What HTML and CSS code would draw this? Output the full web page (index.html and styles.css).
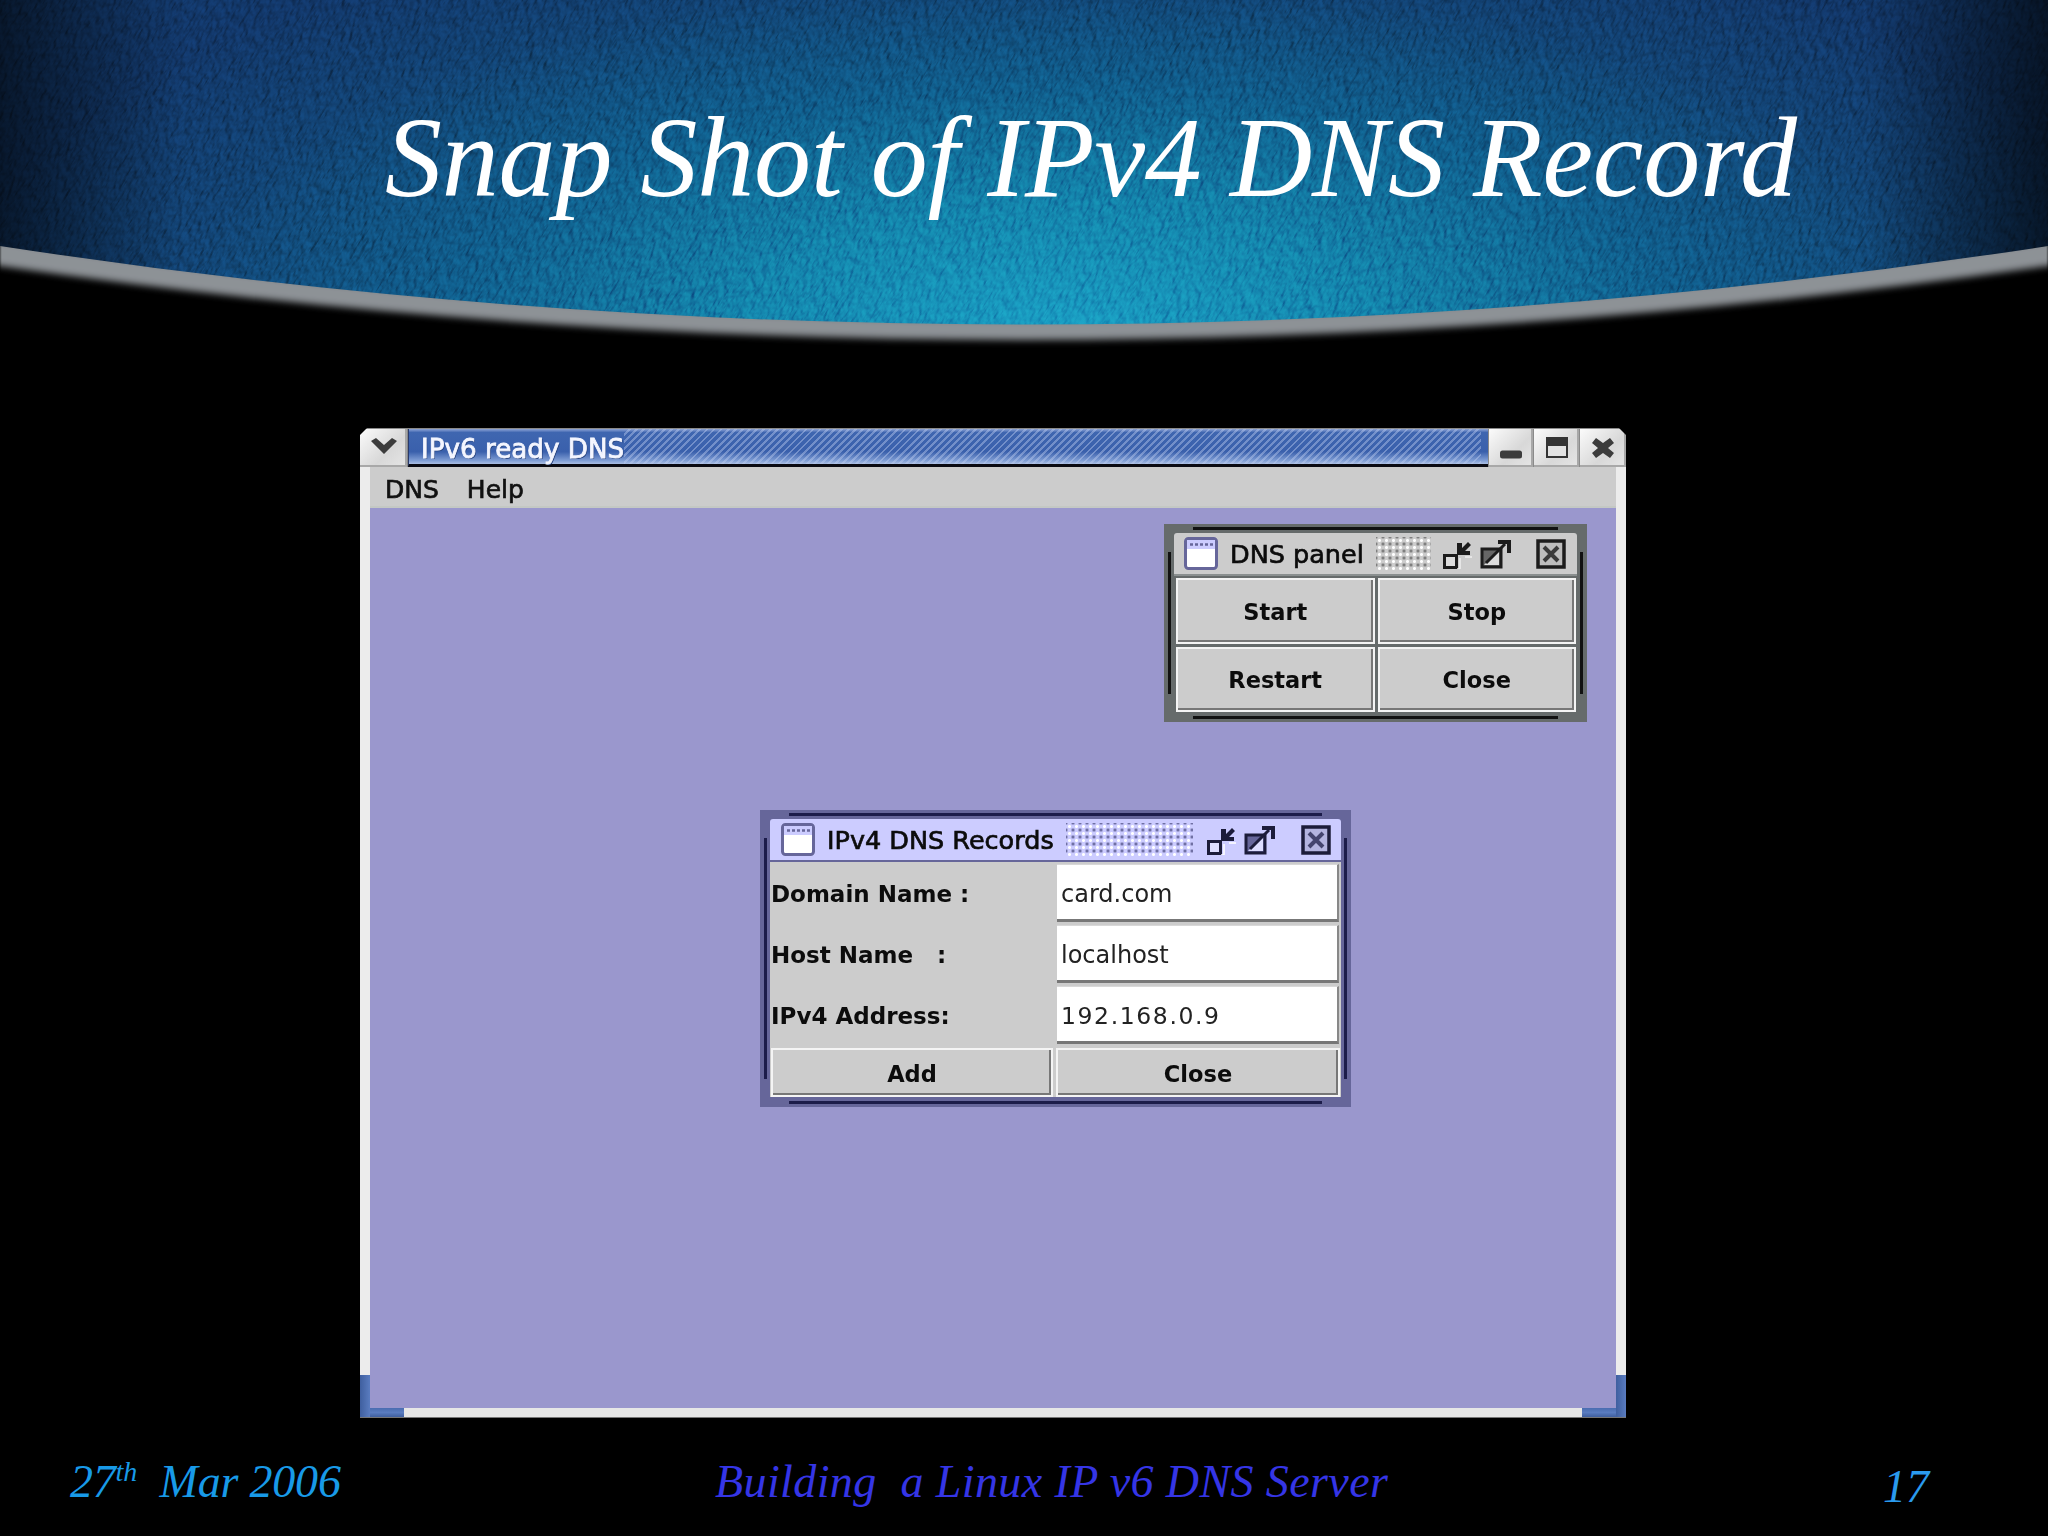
FILE: index.html
```html
<!DOCTYPE html>
<html lang="en">
<head>
<meta charset="utf-8">
<title>Snap Shot of IPv4 DNS Record</title>
<link rel="stylesheet" href="styles.css">
</head>
<body>
<div class="slide">
  <header class="banner">
    <svg class="banner-art" viewBox="0 0 2048 360" width="2048" height="360" aria-hidden="true">
      <defs>
        <radialGradient id="sky" gradientUnits="userSpaceOnUse" cx="0" cy="0" r="1" gradientTransform="translate(1060 330) scale(1120 440)">
          <stop offset="0" stop-color="#1a9fc4"/>
          <stop offset=".28" stop-color="#1487ae"/>
          <stop offset=".55" stop-color="#10608f"/>
          <stop offset=".8" stop-color="#124476"/>
          <stop offset="1" stop-color="#12386b"/>
        </radialGradient>
        <linearGradient id="edge" x1="0" x2="1" y1="0" y2="0">
          <stop offset="0" stop-color="#000" stop-opacity=".6"/>
          <stop offset=".09" stop-color="#000" stop-opacity="0"/>
          <stop offset=".91" stop-color="#000" stop-opacity="0"/>
          <stop offset="1" stop-color="#000" stop-opacity=".65"/>
        </linearGradient>
        <filter id="grain" x="0" y="0" width="100%" height="100%" color-interpolation-filters="sRGB">
          <feTurbulence type="fractalNoise" baseFrequency=".09 .3" numOctaves="3" seed="11" result="n"/>
          <feDiffuseLighting in="n" surfaceScale="2.4" diffuseConstant=".6" lighting-color="#fff">
            <feDistantLight azimuth="200" elevation="58"/>
          </feDiffuseLighting>
        </filter>
        <filter id="soft" x="-5%" y="-100%" width="110%" height="300%">
          <feGaussianBlur stdDeviation="1 3.5"/>
        </filter>
        <clipPath id="skyclip"><path d="M0 0H2048V246Q1024 403 0 246Z"/></clipPath>
      </defs>
      <path d="M0 240Q1024 397 2048 240V266Q1024 414 0 266Z" fill="#8d9296" filter="url(#soft)"/>
      <g clip-path="url(#skyclip)">
        <rect x="0" y="0" width="2048" height="360" fill="url(#sky)"/>
        <rect class="grain-layer" x="-600" y="-1100" width="3300" height="2600" transform="rotate(-58 1024 180)" fill="#fff" filter="url(#grain)"/>
        <rect x="0" y="0" width="2048" height="360" fill="url(#edge)"/>
      </g>
    </svg>
    <h1 class="title">Snap Shot of IPv4 DNS Record</h1>
  </header>

  <main class="window">
    <div class="titlebar">
      <i class="notch notch-l"></i><i class="notch notch-r"></i>
      <div class="wbtn wbtn-menu">
        <svg viewBox="0 0 30 20" width="30" height="20"><path d="M2 4l5-3 8 7 8-7 5 3-13 13z" fill="#3c3c3c"/></svg>
      </div>
      <div class="wtitle"><span class="wtitle-text">IPv6 ready DNS</span></div>
      <div class="wbtn wbtn-min">
        <svg viewBox="0 0 22 9" width="22" height="9"><rect x="0" y="0.5" width="22" height="8" rx="2.5" fill="#3c3c3c"/></svg>
      </div>
      <div class="wbtn wbtn-max">
        <svg viewBox="0 0 22 21" width="22" height="21"><rect x="1" y="1" width="20" height="19" fill="#e2e2e2" stroke="#333" stroke-width="2"/><rect x="1" y="1" width="20" height="8" fill="#333"/></svg>
      </div>
      <div class="wbtn wbtn-close">
        <svg viewBox="0 0 24 22" width="24" height="22"><path d="M5 1l7 5 7-5 4 5-6 5 6 5-4 5-7-5-7 5-4-5 6-5-6-5z" fill="#3c3c3c"/></svg>
      </div>
    </div>
    <div class="frame">
      <nav class="menubar"><span>DNS</span><span>Help</span></nav>
      <div class="desktop">

        <section class="iframe iframe-panel">
          <i class="edge edge-t"></i><i class="edge edge-b"></i><i class="edge edge-l"></i><i class="edge edge-r"></i>
          <div class="ibar">
            <svg class="ico-app" viewBox="0 0 34 33" width="34" height="33"><rect x="1.5" y="1.5" width="31" height="30" rx="3" fill="#fff" stroke="#66669a" stroke-width="3"/><rect x="3" y="3" width="28" height="9" fill="#ccccff"/><path d="M6 7.5h3M11 7.5h3M16 7.5h3M21 7.5h3M26 7.5h3" stroke="#66669a" stroke-width="2.4"/></svg>
            <span class="ibar-text">DNS panel</span>
            <span class="ibar-dots ibar-dots-a"></span>
            <svg class="ico" viewBox="0 0 30 30" width="30" height="30"><rect x="2.5" y="16.5" width="12" height="12" fill="#ddd" stroke="#1c1c1c" stroke-width="3"/><path d="M15 16V4h5v5l6-6 3 3-6 6h5v4z" fill="#1c1c1c"/><path d="M15 30h3v-11M30 18h-7" fill="none" stroke="#eee" stroke-width="1.5"/></svg>
            <svg class="ico ico-second" viewBox="0 0 32 30" width="32" height="30"><rect x="2" y="10" width="19" height="18" fill="#666" stroke="#1c1c1c" stroke-width="3"/><path d="M4 26L19 12v14z" fill="#ddd"/><path d="M6 24L25 5" stroke="#1c1c1c" stroke-width="3"/><path d="M18 1h13v13h-4V5h-9z" fill="#1c1c1c"/></svg>
            <svg class="ico-x" viewBox="0 0 30 30" width="30" height="30"><rect x="2" y="2" width="26" height="26" fill="#bdbdbd" stroke="#1c1c1c" stroke-width="3.5"/><path d="M8 8l14 14M22 8L8 22" stroke="#3a3a3a" stroke-width="4"/></svg>
          </div>
          <div class="btn-grid">
            <button class="jbtn">Start</button>
            <button class="jbtn">Stop</button>
            <button class="jbtn">Restart</button>
            <button class="jbtn">Close</button>
          </div>
        </section>

        <section class="iframe iframe-records">
          <i class="edge edge-t"></i><i class="edge edge-b"></i><i class="edge edge-l"></i><i class="edge edge-r"></i>
          <div class="ibar">
            <svg class="ico-app" viewBox="0 0 34 33" width="34" height="33"><rect x="1.5" y="1.5" width="31" height="30" rx="3" fill="#fff" stroke="#66669a" stroke-width="3"/><rect x="3" y="3" width="28" height="9" fill="#ccccff"/><path d="M6 7.5h3M11 7.5h3M16 7.5h3M21 7.5h3M26 7.5h3" stroke="#66669a" stroke-width="2.4"/></svg>
            <span class="ibar-text">IPv4 DNS Records</span>
            <span class="ibar-dots ibar-dots-b"></span>
            <svg class="ico" viewBox="0 0 30 30" width="30" height="30"><rect x="2.5" y="16.5" width="12" height="12" fill="#ddddff" stroke="#1c1c3a" stroke-width="3"/><path d="M15 16V4h5v5l6-6 3 3-6 6h5v4z" fill="#1c1c3a"/><path d="M15 30h3v-11M30 18h-7" fill="none" stroke="#fff" stroke-width="1.5"/></svg>
            <svg class="ico ico-second" viewBox="0 0 32 30" width="32" height="30"><rect x="2" y="10" width="19" height="18" fill="#66669a" stroke="#1c1c3a" stroke-width="3"/><path d="M4 26L19 12v14z" fill="#ddddff"/><path d="M6 24L25 5" stroke="#1c1c3a" stroke-width="3"/><path d="M18 1h13v13h-4V5h-9z" fill="#1c1c3a"/></svg>
            <svg class="ico-x" viewBox="0 0 30 30" width="30" height="30"><rect x="2" y="2" width="26" height="26" fill="#b4b4e0" stroke="#1c1c3a" stroke-width="3.5"/><path d="M8 8l14 14M22 8L8 22" stroke="#44446e" stroke-width="4"/></svg>
          </div>
          <div class="form">
            <label class="flabel">Domain Name :</label><div class="finput">card.com</div>
            <label class="flabel">Host Name &nbsp; :</label><div class="finput">localhost</div>
            <label class="flabel">IPv4 Address:</label><div class="finput finput-num">192.168.0.9</div>
          </div>
          <div class="form-btns">
            <button class="jbtn">Add</button>
            <button class="jbtn">Close</button>
          </div>
        </section>

      </div>
      <i class="grip grip-l"></i><i class="grip grip-r"></i>
    </div>
  </main>

  <footer class="footer">
    <span class="foot-date">27<sup>th</sup>&nbsp; Mar 2006</span>
    <span class="foot-mid">Building &nbsp;a Linux IP v6 DNS Server</span>
    <span class="foot-num">17</span>
  </footer>
</div>
</body>
</html>
```
FILE: styles.css
```css
* { box-sizing: border-box; }
html, body { margin: 0; padding: 0; background: #000; }
.slide {
  width: 2048px;
  height: 1536px;
  background: #000;
  overflow: hidden;
  display: flex;
  flex-direction: column;
}

/* banner */
.banner {
  position: relative;
  height: 345px;
  flex: none;
  padding: 101px 0 0 385px;
}
.banner-art { position: absolute; left: 0; top: 0; display: block; }
.grain-layer { mix-blend-mode: overlay; opacity: .75; }
.title {
  position: relative;
  margin: 0;
  font: italic 400 114px/114px "Liberation Serif", serif;
  color: #fff;
  white-space: nowrap;
  letter-spacing: -.2px;
}

/* main window */
.window {
  width: 1266px;
  height: 989px;
  margin: 83px 0 0 360px;
  flex: none;
  display: flex;
  flex-direction: column;
  font-family: "DejaVu Sans", sans-serif;
  filter: blur(.55px);
}
.titlebar {
  position: relative;
  height: 39px;
  flex: none;
  display: flex;
  gap: 1px;
  padding-top: 1px;
  background: #8a8a8a;
}
.notch { position: absolute; top: 0; width: 7px; height: 7px; background: #000; z-index: 1; }
.notch-l { left: 0; clip-path: polygon(0 0, 100% 0, 0 100%); }
.notch-r { right: 0; clip-path: polygon(0 0, 100% 0, 100% 100%); }
.wbtn {
  flex: none;
  display: flex;
  align-items: center;
  justify-content: center;
  height: 38px;
  background: linear-gradient(135deg, #fbfbfb, #d8d8d8 60%, #e6e6e6);
  box-shadow: inset -2px -2px 0 #a8a8a8;
}
.wbtn-menu { width: 47px; padding-bottom: 2px; }
.wbtn-min { width: 44px; padding-top: 13px; }
.wbtn-max { width: 45px; padding-bottom: 1px; }
.wbtn-close { width: 46px; padding-bottom: 1px; }
.wtitle {
  flex: 1;
  height: 38px;
  padding-left: 12px;
  display: flex;
  align-items: center;
  border-left: 1px solid #2a3a6a;
  border-bottom: 3px solid #0a0a12;
  background:
    repeating-linear-gradient(135deg, rgba(255,255,255,.0) 0 3px, rgba(190,205,240,.42) 3px 5px) 215px 0 / calc(100% - 222px) 100% no-repeat,
    linear-gradient(180deg, #8ea4d6 0, #3f66b0 10%, #3a60ac 65%, #7f9dd4 90%, #a9bde2 100%);
}
.wtitle-text {
  color: #f4f6ff;
  font-size: 26.2px;
  line-height: 38px;
  padding-top: 4px;
  -webkit-text-stroke: .8px #f4f6ff;
  text-shadow: 1px 1px 0 #24407c;
}
.frame {
  position: relative;
  flex: 1;
  display: flex;
  flex-direction: column;
  border-left: 10px solid #ececec;
  border-right: 10px solid #ececec;
  border-bottom: 9px solid #e6e6e6;
  box-shadow: 0 1px 0 #777;
}
.menubar {
  height: 41px;
  flex: none;
  background: #cccccc;
  border-bottom: 2px solid #c4c8c4;
  display: flex;
  align-items: center;
  gap: 28px;
  padding: 5px 0 0 15px;
  font-size: 25px;
  color: #111;
  -webkit-text-stroke: .7px #111;
}
.desktop {
  position: relative;
  flex: 1;
  background: #9a97cd;
}
.grip { position: absolute; background: linear-gradient(180deg, #4a6cb0, #5a7cc0 50%, #3f5f9f); }
.grip-l { left: -10px; bottom: -9px; width: 44px; height: 9px; }
.grip-r { right: -10px; bottom: -9px; width: 44px; height: 9px; }
.grip-l::before, .grip-r::before {
  content: "";
  position: absolute;
  bottom: 0;
  width: 10px;
  height: 42px;
  background: linear-gradient(90deg, #3f5f9f, #5a7cc0);
}
.grip-l::before { left: 0; }
.grip-r::before { right: 0; }

/* internal frames */
.iframe {
  position: absolute;
  display: flex;
  flex-direction: column;
  background: #666b6b;
  color: #0c0c0c;
}
.iframe-panel {
  left: 794px;
  top: 16px;
  width: 423px;
  height: 198px;
  padding: 9px 10px 10px;
}
.iframe-records {
  left: 390px;
  top: 302px;
  width: 591px;
  height: 297px;
  padding: 9px 10px 10px;
  background: #66669a;
}
.edge { position: absolute; background: #111; }
.iframe-records .edge { background: #1c1c4a; }
.edge-t, .edge-b { left: 29px; right: 29px; height: 3px; }
.edge-t { top: 3px; }
.edge-b { bottom: 3px; }
.edge-l, .edge-r { width: 3px; top: 28px; bottom: 28px; }
.edge-l { left: 4px; }
.edge-r { right: 4px; }

.ibar {
  height: 43px;
  flex: none;
  display: flex;
  align-items: center;
  padding-left: 10px;
  background: #cccccc;
  border-bottom: 2px solid #8a8f8f;
  border-radius: 3px 3px 0 0;
}
.iframe-records .ibar { background: #ccccff; border-bottom-color: #66669a; padding-left: 11px; }
.ibar-text {
  margin-left: 12px;
  font-size: 25.5px;
  white-space: nowrap;
  -webkit-text-stroke: .7px #0c0c0c;
}
.ibar-dots {
  height: 33px;
  background-image:
    radial-gradient(circle, #fff 0 1.3px, transparent 1.6px),
    radial-gradient(circle, #777 0 1.3px, transparent 1.6px);
  background-size: 7px 7px;
  background-position: 0 0, 3.5px 3.5px;
  margin-left: 12px;
}
.iframe-records .ibar-dots {
  background-image:
    radial-gradient(circle, #fff 0 1.3px, transparent 1.6px),
    radial-gradient(circle, #66669a 0 1.3px, transparent 1.6px);
}
.ibar-dots-a { width: 55px; }
.ibar-dots-b { width: 127px; }
.ico { margin-left: 11px; flex: none; }
.ico-second { margin-left: 8px; }
.ico-x { margin-left: 24px; flex: none; }
.iframe-records .ico { margin-left: 13px; }
.iframe-records .ico-second { margin-left: 8px; }
.iframe-records .ico-x { margin-left: 25px; }

.btn-grid {
  flex: 1;
  display: grid;
  grid-template-columns: 1fr 1fr;
  grid-template-rows: 1fr 1fr;
  gap: 3px;
  padding: 2px 1px 0 2px;
}
.jbtn {
  margin: 0;
  padding: 2px 0 0;
  background: #cccccc;
  border: 2px solid #f4f4f4;
  box-shadow: inset -2px -2px 0 #777;
  font: 700 22.5px "DejaVu Sans", sans-serif;
  color: #0c0c0c;
}

.form {
  display: grid;
  grid-template-columns: 287px 1fr;
  grid-template-rows: 61px 61px 61px;
  background: #cccccc;
  flex: none;
}
.flabel {
  display: flex;
  align-items: center;
  padding: 2px 0 0 1px;
  font-size: 23px;
  font-weight: 700;
  white-space: pre;
}
.finput {
  display: flex;
  align-items: center;
  margin: 2px 2px 1px 0;
  padding: 3px 0 0 4px;
  background: #fff;
  border-top: 1px solid #d8d8d8;
  border-right: 2px solid #888;
  border-bottom: 3px solid #777;
  font-size: 24px;
  color: #222;
}
.finput-num { letter-spacing: 1.6px; font-size: 23.5px; }
.form-btns {
  flex: 1;
  display: grid;
  grid-template-columns: 282px 1fr;
  gap: 3px;
  padding: 3px 1px 0 1px;
  background: #cccccc;
}

/* footer */
.footer {
  position: relative;
  flex: 1;
  font-family: "Liberation Serif", serif;
  font-style: italic;
  display: flex;
  align-items: flex-start;
  padding-top: 40px;
  white-space: nowrap;
}
.foot-date { margin-left: 70px; width: 645px; font-size: 46px; line-height: 50px; color: #189ae8; letter-spacing: -.2px; }
.foot-date sup { font-size: 28px; line-height: 0; }
.foot-mid { width: 1168px; font-size: 46px; line-height: 50px; color: #3535e6; letter-spacing: .4px; }
.foot-num { font-size: 46px; line-height: 50px; color: #2a9aee; margin-top: 5px; }
```
